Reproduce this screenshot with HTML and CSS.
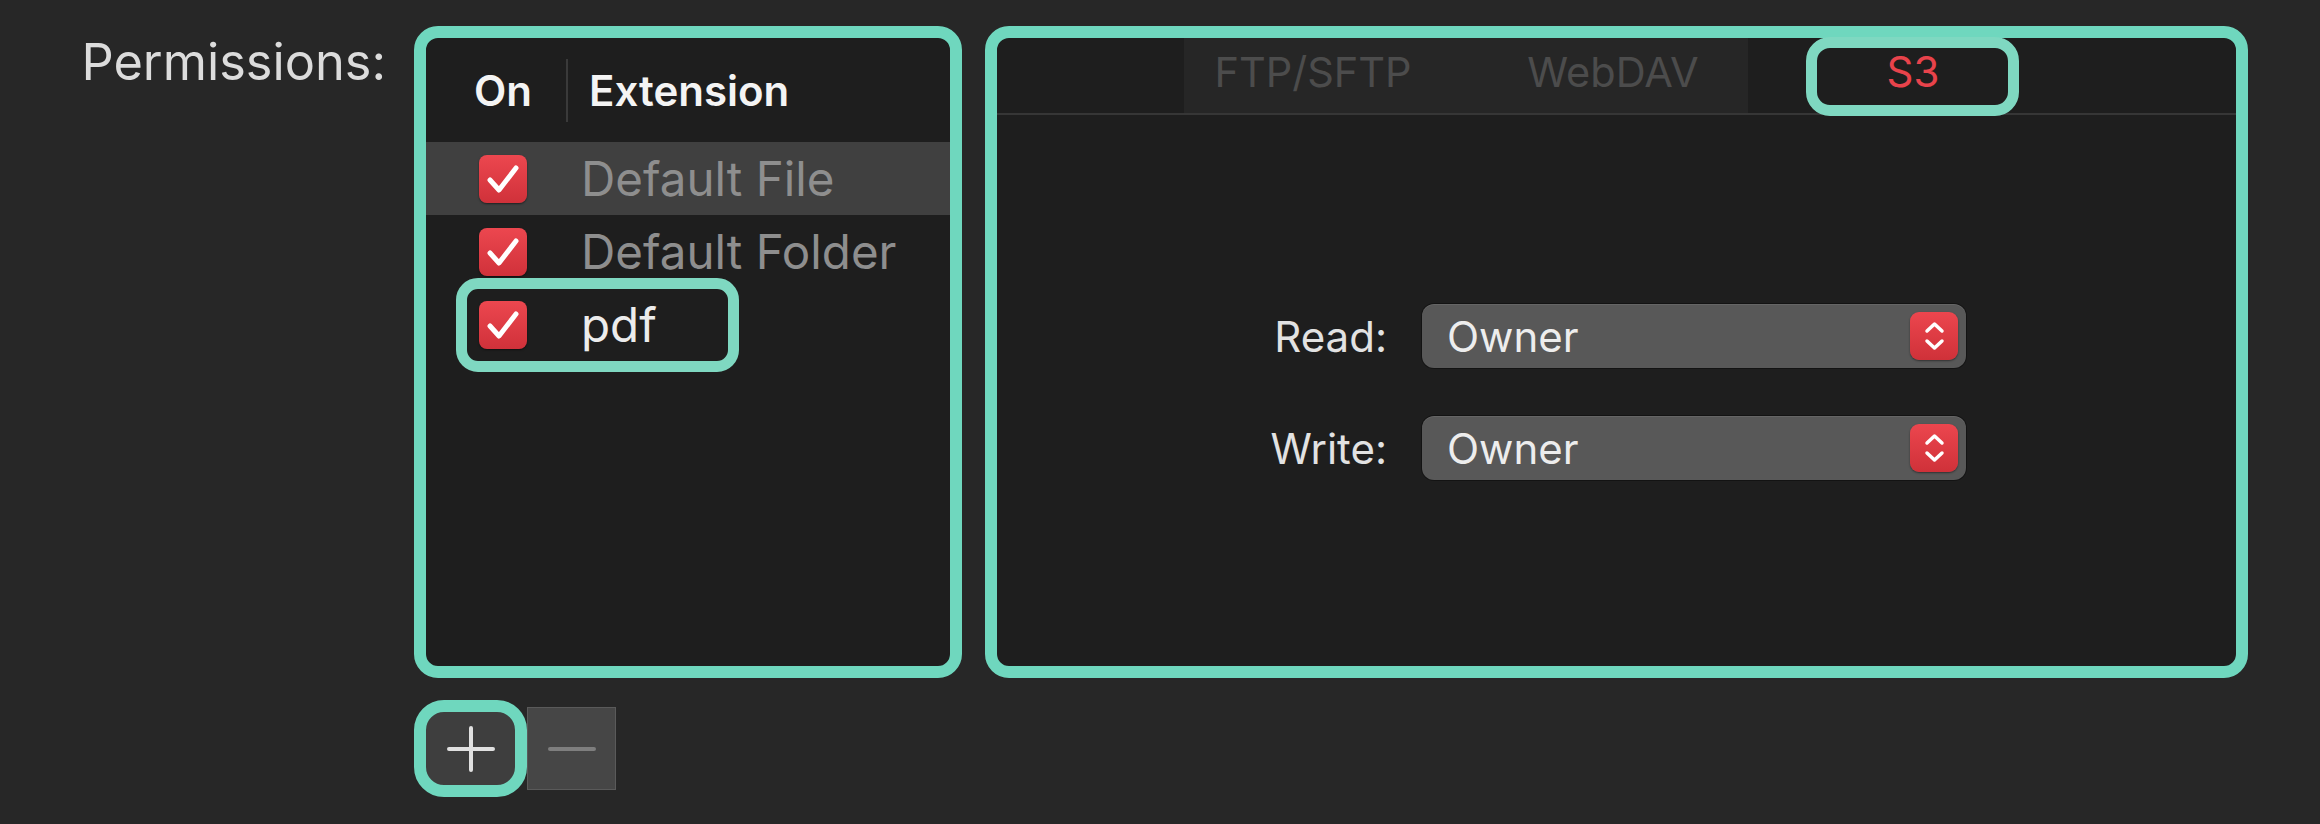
FILE: index.html
```html
<!DOCTYPE html>
<html lang="en">
<head>
<meta charset="utf-8">
<title>Permissions</title>
<link rel="stylesheet" href="styles.css">
</head>
<body>
<div class="page">
  <div class="label">Permissions:</div>
  <div class="left-col">
    <div class="list-panel">
      <div class="list-header">
        <div class="hcell on">On</div>
        <div class="hsep"></div>
        <div class="hcell ext">Extension</div>
      </div>
      <div class="row selected">
        <div class="cbcell"><span class="checkbox"><svg viewBox="0 0 48 48" width="48" height="48"><path d="M11 25 L20 35 L37 13" fill="none" stroke="#fff" stroke-width="5" stroke-linecap="round" stroke-linejoin="round"/></svg></span></div>
        <div class="name dim">Default File</div>
      </div>
      <div class="row">
        <div class="cbcell"><span class="checkbox"><svg viewBox="0 0 48 48" width="48" height="48"><path d="M11 25 L20 35 L37 13" fill="none" stroke="#fff" stroke-width="5" stroke-linecap="round" stroke-linejoin="round"/></svg></span></div>
        <div class="name dim">Default Folder</div>
      </div>
      <div class="row">
        <div class="cbcell"><span class="checkbox"><svg viewBox="0 0 48 48" width="48" height="48"><path d="M11 25 L20 35 L37 13" fill="none" stroke="#fff" stroke-width="5" stroke-linecap="round" stroke-linejoin="round"/></svg></span></div>
        <div class="name">pdf</div>
        <div class="hl hl-row"></div>
      </div>
    </div>
    <div class="btns">
      <div class="btn plus"><svg viewBox="0 0 48 48" width="48" height="48"><path d="M24 3 V45 M2 24 H46" stroke="#e0e0e0" stroke-width="4" stroke-linecap="round"/></svg></div>
      <div class="btn minus"><svg viewBox="0 0 48 8" width="48" height="8"><path d="M2 4 H46" stroke="#7e7e7e" stroke-width="4" stroke-linecap="round"/></svg></div>
    </div>
  </div>
  <div class="right-panel">
    <div class="tabbar">
      <div class="tab t1">FTP/SFTP</div>
      <div class="tab t2">WebDAV</div>
      <div class="tab t3"><span class="hl hl-tab"></span><span class="s3">S3</span></div>
    </div>
    <div class="tab-body">
      <div class="form">
        <div class="flabel">Read:</div>
        <div class="select">Owner<span class="stepper"><svg viewBox="0 0 48 48" width="48" height="48"><path d="M17 19 L24.5 12 L32 19 M17 29 L24.5 36 L32 29" fill="none" stroke="#fff" stroke-width="3.5" stroke-linecap="round" stroke-linejoin="round"/></svg></span></div>
        <div class="flabel">Write:</div>
        <div class="select">Owner<span class="stepper"><svg viewBox="0 0 48 48" width="48" height="48"><path d="M17 19 L24.5 12 L32 19 M17 29 L24.5 36 L32 29" fill="none" stroke="#fff" stroke-width="3.5" stroke-linecap="round" stroke-linejoin="round"/></svg></span></div>
      </div>
    </div>
  </div>
</div>
</body>
</html>
```

FILE: styles.css
```css
* { box-sizing: border-box; }
html, body {
  margin: 0;
  padding: 0;
  background: #272727;
  width: 2320px;
  height: 824px;
  overflow: hidden;
  font-family: Inter, "Noto Sans", "Liberation Sans", sans-serif;
}
.page {
  display: flex;
  align-items: flex-start;
  padding-top: 26px;
}
.label {
  width: 386px;
  margin-right: 28px;
  text-align: right;
  color: #dcdcdc;
  font-size: 50.5px;
  line-height: 1;
  padding-top: 11px;
}
.left-col {
  width: 548px;
  margin-right: 23px;
  display: flex;
  flex-direction: column;
}
.list-panel {
  position: relative;
  height: 652px;
  border: 12px solid #6fd7be;
  border-radius: 24px;
  background: #1e1e1e;
}
.list-header {
  height: 104px;
  display: flex;
  align-items: center;
}
.hcell {
  color: #f4f4f4;
  font-size: 42px;
  font-weight: 600;
}
.hcell.on {
  width: 140px;
  padding-left: 14px;
  text-align: center;
}
.hsep {
  width: 2px;
  height: 63px;
  background: #3a3a3a;
}
.hcell.ext {
  padding-left: 21px;
}
.row {
  position: relative;
  height: 73px;
  display: flex;
  align-items: center;
}
.row.selected {
  background: #404040;
}
.cbcell {
  width: 140px;
  padding-left: 14px;
  display: flex;
  justify-content: center;
}
.checkbox {
  width: 48px;
  height: 48px;
  border-radius: 8px;
  background: linear-gradient(#ec474f, #d0313a);
  box-shadow: 0 1px 2px rgba(0,0,0,0.5);
  display: block;
}
.checkbox svg { display: block; }
.name {
  margin-left: 15px;
  font-size: 47.5px;
  color: #ececec;
}
.name.dim {
  color: #8e8e8e;
}
.hl {
  position: absolute;
  border: 11px solid #7fd8c1;
  pointer-events: none;
}
.hl-row {
  left: 30px;
  top: -10px;
  width: 283px;
  height: 94px;
  border-radius: 22px;
}
.btns {
  margin-top: 22px;
  display: flex;
  align-items: center;
}
.btn {
  display: flex;
  align-items: center;
  justify-content: center;
}
.btn.plus {
  width: 113px;
  height: 97px;
  border: 12px solid #6fd7be;
  border-radius: 30px;
  background: #3e3e3e;
}
.btn.minus {
  width: 89px;
  height: 83px;
  background: #464646;
  border: 1px solid #5a5a5a;
}
.right-panel {
  position: relative;
  width: 1263px;
  height: 652px;
  border: 12px solid #6fd7be;
  border-radius: 24px;
  background: #1e1e1e;
  display: flex;
  flex-direction: column;
}
.tabbar {
  position: relative;
  height: 77px;
  border-bottom: 2px solid #363636;
  display: flex;
  padding-left: 187px;
}
.tab {
  position: relative;
  height: 75px;
  display: flex;
  align-items: center;
  justify-content: center;
  padding-bottom: 8px;
  font-size: 41.5px;
  color: #4c4c4c;
}
.tab.t1 {
  width: 279px;
  padding-right: 21px;
  background: #262626;
}
.tab.t2 {
  width: 285px;
  padding-left: 15px;
  margin-right: 15px;
  background: #262626;
}
.tab.t3 {
  width: 300px;
}
.s3 {
  position: relative;
  color: #e8434b;
  font-size: 42px;
}
.hl-tab {
  left: 43px;
  top: -1px;
  width: 213px;
  height: 79px;
  border-radius: 24px;
  background: #1e1e1e;
}
.tab-body {
  flex: 1;
  display: flex;
  align-items: center;
  justify-content: center;
  padding-top: 3px;
}
.form {
  display: grid;
  grid-template-columns: 120px 544px;
  column-gap: 35px;
  row-gap: 48px;
  align-items: center;
}
.flabel {
  justify-self: end;
  font-size: 42px;
  color: #e2e2e2;
  white-space: nowrap;
}
.select {
  position: relative;
  height: 64px;
  border-radius: 12px;
  background: #585858;
  box-shadow: 0 0 0 1px rgba(0,0,0,0.35), inset 0 1px 0 rgba(255,255,255,0.08);
  padding-left: 25px;
  display: flex;
  align-items: center;
  font-size: 42px;
  color: #ededed;
}
.stepper {
  position: absolute;
  right: 8px;
  top: 8px;
  width: 48px;
  height: 48px;
  border-radius: 9px;
  background: linear-gradient(#ec464e, #cf3139);
  box-shadow: 0 1px 2px rgba(0,0,0,0.45);
}
.stepper svg { display: block; }
```
